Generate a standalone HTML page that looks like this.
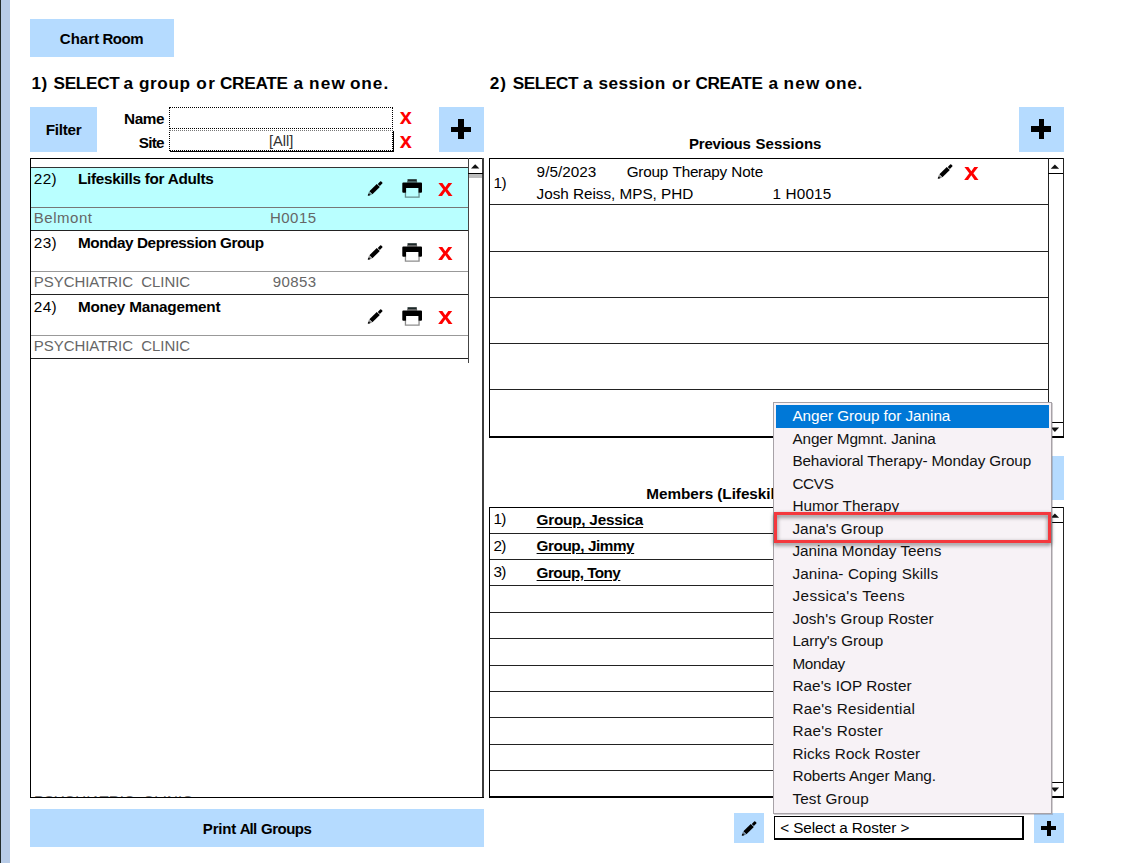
<!DOCTYPE html>
<html>
<head>
<meta charset="utf-8">
<title>Group Notes</title>
<style>
html,body{margin:0;padding:0;}
body{width:1138px;height:863px;position:relative;overflow:hidden;background:#fff;
 font-family:"Liberation Sans",sans-serif;font-size:14.67px;color:#000;}
.a{position:absolute;}
.t{position:absolute;white-space:pre;line-height:1;}
.b{font-weight:bold;}
.g{color:#666;}
.h{font-weight:bold;font-size:17.2px;letter-spacing:.37px;}
.rx{position:absolute;white-space:pre;line-height:1;font-weight:bold;color:#f00;font-size:22px;}
.dd{font-size:15px;color:#111;}
</style>
</head>
<body>
<div class="a" style="left:0px;top:0px;width:1px;height:863px;background:#232b2b"></div>
<div class="a" style="left:1px;top:0px;width:9px;height:863px;background:#b8cce8"></div>
<div class="a" style="left:30px;top:19px;width:144px;height:38px;background:#b5dbff"></div>
<div class="t " style="left:59.80px;top:30.8px;font-size:15px;letter-spacing:0.04px;font-weight:bold;">Chart</div>
<div class="t " style="left:102.40px;top:30.8px;font-size:15px;letter-spacing:-0.41px;font-weight:bold;">Room</div>
<div class="t " style="left:31.60px;top:74.5px;font-size:17.2px;letter-spacing:0.39px;font-weight:bold;">1)</div>
<div class="t " style="left:53.50px;top:74.5px;font-size:17.2px;letter-spacing:-0.31px;font-weight:bold;">SELECT</div>
<div class="t " style="left:123.60px;top:74.5px;font-size:17.2px;letter-spacing:0.00px;font-weight:bold;">a</div>
<div class="t " style="left:138.90px;top:74.5px;font-size:17.2px;letter-spacing:0.63px;font-weight:bold;">group</div>
<div class="t " style="left:196.20px;top:74.5px;font-size:17.2px;letter-spacing:1.50px;font-weight:bold;">or</div>
<div class="t " style="left:219.90px;top:74.5px;font-size:17.2px;letter-spacing:-0.26px;font-weight:bold;">CREATE</div>
<div class="t " style="left:293.60px;top:74.5px;font-size:17.2px;letter-spacing:0.00px;font-weight:bold;">a</div>
<div class="t " style="left:309.10px;top:74.5px;font-size:17.2px;letter-spacing:1.17px;font-weight:bold;">new</div>
<div class="t " style="left:349.90px;top:74.5px;font-size:17.2px;letter-spacing:0.98px;font-weight:bold;">one.</div>
<div class="t " style="left:489.70px;top:74.5px;font-size:17.2px;letter-spacing:0.99px;font-weight:bold;">2)</div>
<div class="t " style="left:512.70px;top:74.5px;font-size:17.2px;letter-spacing:-0.39px;font-weight:bold;">SELECT</div>
<div class="t " style="left:583.00px;top:74.5px;font-size:17.2px;letter-spacing:0.00px;font-weight:bold;">a</div>
<div class="t " style="left:598.40px;top:74.5px;font-size:17.2px;letter-spacing:0.47px;font-weight:bold;">session</div>
<div class="t " style="left:672.10px;top:74.5px;font-size:17.2px;letter-spacing:1.00px;font-weight:bold;">or</div>
<div class="t " style="left:695.40px;top:74.5px;font-size:17.2px;letter-spacing:-0.36px;font-weight:bold;">CREATE</div>
<div class="t " style="left:768.40px;top:74.5px;font-size:17.2px;letter-spacing:0.00px;font-weight:bold;">a</div>
<div class="t " style="left:783.40px;top:74.5px;font-size:17.2px;letter-spacing:1.32px;font-weight:bold;">new</div>
<div class="t " style="left:824.90px;top:74.5px;font-size:17.2px;letter-spacing:0.72px;font-weight:bold;">one.</div>
<div class="a" style="left:30px;top:107px;width:67px;height:45px;background:#b5dbff"></div>
<div class="t " style="left:45.80px;top:122.3px;font-size:15.3px;letter-spacing:-0.32px;font-weight:bold;">Filter</div>
<div class="t " style="left:124.00px;top:111.2px;font-size:15.3px;letter-spacing:-0.36px;font-weight:bold;">Name</div>
<div class="t " style="left:138.70px;top:134.9px;font-size:15.3px;letter-spacing:-0.73px;font-weight:bold;">Site</div>
<div class="a" style="left:169px;top:107px;width:222px;height:20px;border:1px dotted #000"></div>
<div class="a" style="left:169px;top:130px;width:222px;height:19px;border:1px dotted #000;border-top-color:#777;box-shadow:1px 1px 0 #000"></div>
<div class="t " style="left:269px;top:134px;color:#333">[All]</div>
<div class="rx" style="left:399.7px;top:106.3px;font-size:21.8px;transform-origin:0 0;transform:scaleX(1)">x</div>
<div class="rx" style="left:399.7px;top:129.8px;font-size:21.8px;transform-origin:0 0;transform:scaleX(1)">x</div>
<div class="a" style="left:439px;top:107px;width:45px;height:45px;background:#b5dbff"></div>
<div class="a" style="left:451px;top:126.5px;width:20px;height:5.2px;background:#000"></div>
<div class="a" style="left:458.4px;top:119px;width:5.2px;height:20px;background:#000"></div>
<div class="a" style="left:30px;top:158px;width:454px;height:1px;background:#000"></div>
<div class="a" style="left:30px;top:158px;width:1px;height:640px;background:#000"></div>
<div class="a" style="left:482px;top:158px;width:2px;height:640px;background:#3c3c3c"></div>
<div class="a" style="left:30px;top:797px;width:454px;height:1px;background:#000"></div>
<div class="a" style="left:468px;top:158px;width:1px;height:205px;background:#444"></div>
<div class="a" style="left:468px;top:173px;width:15px;height:1px;background:#000"></div>
<div class="a" style="left:469px;top:174px;width:13px;height:4px;background:#bdbdbd"></div>
<svg class="a" style="left:469px;top:159px" width="13" height="14" viewBox="0 0 13 14"><path d="M2.0 9.6 L6.2 5.2 L10.4 9.6 Z" fill="#111"/></svg>
<div class="a" style="left:31px;top:168px;width:437px;height:62px;background:#b9ffff"></div>
<div class="a" style="left:31px;top:167px;width:437px;height:1px;background:#333"></div>
<div class="a" style="left:31px;top:207px;width:437px;height:1px;background:#777"></div>
<div class="a" style="left:31px;top:230px;width:437px;height:1px;background:#222"></div>
<div class="a" style="left:31px;top:271px;width:437px;height:1px;background:#999"></div>
<div class="a" style="left:31px;top:294px;width:437px;height:1px;background:#222"></div>
<div class="a" style="left:31px;top:335px;width:437px;height:1px;background:#999"></div>
<div class="a" style="left:31px;top:358px;width:437px;height:1px;background:#222"></div>
<div class="t " style="left:33.80px;top:170.5px;font-size:15.3px;letter-spacing:0.35px;">22)</div>
<div class="t " style="left:77.90px;top:170.5px;font-size:15.3px;letter-spacing:-0.27px;font-weight:bold;">Lifeskills for Adults</div>
<div class="t g" style="left:33.80px;top:210px;font-size:15px;letter-spacing:0.52px;">Belmont</div>
<div class="t g" style="left:269.90px;top:210px;font-size:15px;letter-spacing:0.51px;">H0015</div>
<svg class="a" style="left:367px;top:181px" width="16" height="16" viewBox="0 0 16 16"><path d="M2.38 10.28 L9.78 2.88 L12.82 5.92 L5.42 13.32 Z" fill="#000"/><rect x="11.75" y="0.35" width="3.0" height="4.3" rx="0.8" transform="rotate(45 13.25 2.5)" fill="#000"/><path d="M1.98 10.68 L5.02 13.72 L0.6 15.1 Z" fill="rgba(0,0,0,.5)"/><circle cx="1.9" cy="13.8" r="1.0" fill="#111"/></svg>
<svg class="a" style="left:402.3px;top:179px" width="21" height="20" viewBox="0 0 21 20"><rect x="5.5" y="0.2" width="9.3" height="1.8" fill="#1c2828"/><rect x="5.2" y="2.0" width="9.9" height="1.6" fill="rgba(0,0,0,.6)"/><path d="M1.3 3.5 H19 a1 1 0 0 1 1 1 V12.8 a1 1 0 0 1 -1 1 H16.4 V8.9 H4.1 V13.8 H1.3 a1 1 0 0 1 -1 -1 V4.5 a1 1 0 0 1 1 -1 Z" fill="#000"/><path d="M2.8 13.8 H4.1 V17.4 H16.4 V13.8 H17.7 V18.8 H2.8 Z" fill="rgba(0,0,0,.45)"/></svg>
<div class="rx" style="left:438.4px;top:177.2px;font-size:23.4px;transform-origin:0 0;transform:scaleX(1.13)">x</div>
<div class="t " style="left:33.80px;top:234.5px;font-size:15.3px;letter-spacing:0.35px;">23)</div>
<div class="t " style="left:77.90px;top:234.5px;font-size:15.3px;letter-spacing:-0.42px;font-weight:bold;">Monday Depression Group</div>
<div class="t g" style="left:33.80px;top:274px;font-size:15px;letter-spacing:-0.05px;">PSYCHIATRIC  CLINIC</div>
<div class="t g" style="left:272.80px;top:274px;font-size:15px;letter-spacing:0.40px;">90853</div>
<svg class="a" style="left:367px;top:245px" width="16" height="16" viewBox="0 0 16 16"><path d="M2.38 10.28 L9.78 2.88 L12.82 5.92 L5.42 13.32 Z" fill="#000"/><rect x="11.75" y="0.35" width="3.0" height="4.3" rx="0.8" transform="rotate(45 13.25 2.5)" fill="#000"/><path d="M1.98 10.68 L5.02 13.72 L0.6 15.1 Z" fill="rgba(0,0,0,.5)"/><circle cx="1.9" cy="13.8" r="1.0" fill="#111"/></svg>
<svg class="a" style="left:402.3px;top:243px" width="21" height="20" viewBox="0 0 21 20"><rect x="5.5" y="0.2" width="9.3" height="1.8" fill="#1c2828"/><rect x="5.2" y="2.0" width="9.9" height="1.6" fill="rgba(0,0,0,.6)"/><path d="M1.3 3.5 H19 a1 1 0 0 1 1 1 V12.8 a1 1 0 0 1 -1 1 H16.4 V8.9 H4.1 V13.8 H1.3 a1 1 0 0 1 -1 -1 V4.5 a1 1 0 0 1 1 -1 Z" fill="#000"/><path d="M2.8 13.8 H4.1 V17.4 H16.4 V13.8 H17.7 V18.8 H2.8 Z" fill="rgba(0,0,0,.45)"/></svg>
<div class="rx" style="left:438.4px;top:241.2px;font-size:23.4px;transform-origin:0 0;transform:scaleX(1.13)">x</div>
<div class="t " style="left:33.80px;top:298.5px;font-size:15.3px;letter-spacing:0.35px;">24)</div>
<div class="t " style="left:77.90px;top:298.5px;font-size:15.3px;letter-spacing:-0.24px;font-weight:bold;">Money Management</div>
<div class="t g" style="left:33.80px;top:338px;font-size:15px;letter-spacing:-0.05px;">PSYCHIATRIC  CLINIC</div>
<svg class="a" style="left:367px;top:309px" width="16" height="16" viewBox="0 0 16 16"><path d="M2.38 10.28 L9.78 2.88 L12.82 5.92 L5.42 13.32 Z" fill="#000"/><rect x="11.75" y="0.35" width="3.0" height="4.3" rx="0.8" transform="rotate(45 13.25 2.5)" fill="#000"/><path d="M1.98 10.68 L5.02 13.72 L0.6 15.1 Z" fill="rgba(0,0,0,.5)"/><circle cx="1.9" cy="13.8" r="1.0" fill="#111"/></svg>
<svg class="a" style="left:402.3px;top:307px" width="21" height="20" viewBox="0 0 21 20"><rect x="5.5" y="0.2" width="9.3" height="1.8" fill="#1c2828"/><rect x="5.2" y="2.0" width="9.9" height="1.6" fill="rgba(0,0,0,.6)"/><path d="M1.3 3.5 H19 a1 1 0 0 1 1 1 V12.8 a1 1 0 0 1 -1 1 H16.4 V8.9 H4.1 V13.8 H1.3 a1 1 0 0 1 -1 -1 V4.5 a1 1 0 0 1 1 -1 Z" fill="#000"/><path d="M2.8 13.8 H4.1 V17.4 H16.4 V13.8 H17.7 V18.8 H2.8 Z" fill="rgba(0,0,0,.45)"/></svg>
<div class="rx" style="left:438.4px;top:305.2px;font-size:23.4px;transform-origin:0 0;transform:scaleX(1.13)">x</div>
<div class="a" style="left:31px;top:796px;width:300px;height:1px;overflow:hidden"><div class="t g" style="left:3px;top:-3px;font-size:15px;letter-spacing:.1px;color:#777">PSYCHIATRIC  CLINIC</div></div>
<div class="a" style="left:30px;top:809px;width:454px;height:38px;background:#b5dbff"></div>
<div class="t " style="left:202.80px;top:821.3px;font-size:15px;letter-spacing:-0.15px;font-weight:bold;">Print</div>
<div class="t " style="left:239.70px;top:821.3px;font-size:15px;letter-spacing:-0.90px;font-weight:bold;">All</div>
<div class="t " style="left:261.00px;top:821.3px;font-size:15px;letter-spacing:-0.49px;font-weight:bold;">Groups</div>
<div class="t " style="left:689.10px;top:136px;font-size:15px;letter-spacing:-0.23px;font-weight:bold;">Previous</div>
<div class="t " style="left:755.60px;top:136px;font-size:15px;letter-spacing:-0.01px;font-weight:bold;">Sessions</div>
<div class="a" style="left:1019px;top:107px;width:45px;height:45px;background:#b5dbff"></div>
<div class="a" style="left:1031.3px;top:126.4px;width:20px;height:5.2px;background:#000"></div>
<div class="a" style="left:1038.7px;top:119px;width:5.2px;height:20px;background:#000"></div>
<div class="a" style="left:489px;top:158px;width:575px;height:1px;background:#000"></div>
<div class="a" style="left:489px;top:158px;width:1px;height:280px;background:#000"></div>
<div class="a" style="left:1063px;top:158px;width:1px;height:280px;background:#222"></div>
<div class="a" style="left:1048px;top:158px;width:1px;height:280px;background:#222"></div>
<div class="a" style="left:489px;top:436px;width:575px;height:2px;background:#000"></div>
<div class="a" style="left:490px;top:204px;width:558px;height:1px;background:#222"></div>
<div class="a" style="left:490px;top:251px;width:558px;height:1px;background:#222"></div>
<div class="a" style="left:490px;top:297px;width:558px;height:1px;background:#222"></div>
<div class="a" style="left:490px;top:343px;width:558px;height:1px;background:#222"></div>
<div class="a" style="left:490px;top:389px;width:558px;height:1px;background:#222"></div>
<div class="a" style="left:1048px;top:173px;width:15px;height:1px;background:#000"></div>
<div class="a" style="left:1048px;top:422px;width:15px;height:1px;background:#000"></div>
<svg class="a" style="left:1049px;top:159px" width="14" height="14" viewBox="0 0 14 14"><path d="M1.7 9.8 L5.9 5.5 L10.1 9.8 Z" fill="#111"/></svg>
<svg class="a" style="left:1049px;top:423px" width="14" height="14" viewBox="0 0 14 14"><path d="M1.7 4.6 L10.1 4.6 L5.9 8.9 Z" fill="#111"/></svg>
<div class="t " style="left:493.60px;top:175px;font-size:15.3px;letter-spacing:-0.62px;">1)</div>
<div class="t " style="left:536.60px;top:164.2px;font-size:15.3px;letter-spacing:0.03px;">9/5/2023</div>
<div class="t " style="left:626.70px;top:164.2px;font-size:15.3px;letter-spacing:-0.23px;">Group</div>
<div class="t " style="left:672.60px;top:164.2px;font-size:15.3px;letter-spacing:-0.28px;">Therapy</div>
<div class="t " style="left:731.20px;top:164.2px;font-size:15.3px;letter-spacing:-0.06px;">Note</div>
<div class="t " style="left:536.60px;top:186.4px;font-size:15.3px;letter-spacing:-0.03px;">Josh Reiss, MPS, PHD</div>
<div class="t " style="left:772.40px;top:186.4px;font-size:15.3px;letter-spacing:0.18px;">1 H0015</div>
<svg class="a" style="left:937.3px;top:164px" width="16" height="16" viewBox="0 0 16 16"><path d="M2.38 10.28 L9.78 2.88 L12.82 5.92 L5.42 13.32 Z" fill="#000"/><rect x="11.75" y="0.35" width="3.0" height="4.3" rx="0.8" transform="rotate(45 13.25 2.5)" fill="#000"/><path d="M1.98 10.68 L5.02 13.72 L0.6 15.1 Z" fill="rgba(0,0,0,.5)"/><circle cx="1.9" cy="13.8" r="1.0" fill="#111"/></svg>
<div class="rx" style="left:963.8px;top:160.8px;font-size:23.4px;transform-origin:0 0;transform:scaleX(1.13)">x</div>
<div class="t b" style="left:646.3px;top:486px;font-size:15.3px;letter-spacing:-.05px">Members (Lifeskills for Adults)</div>
<div class="a" style="left:1019px;top:456px;width:45px;height:44px;background:#b5dbff"></div>
<div class="a" style="left:489px;top:507px;width:575px;height:1px;background:#000"></div>
<div class="a" style="left:489px;top:507px;width:1px;height:290px;background:#000"></div>
<div class="a" style="left:1063px;top:507px;width:1px;height:290px;background:#222"></div>
<div class="a" style="left:1048px;top:507px;width:1px;height:290px;background:#222"></div>
<div class="a" style="left:489px;top:796px;width:575px;height:2px;background:#000"></div>
<div class="a" style="left:1048px;top:522px;width:15px;height:1px;background:#000"></div>
<div class="a" style="left:1048px;top:782px;width:15px;height:1px;background:#000"></div>
<svg class="a" style="left:1049px;top:508px" width="14" height="14" viewBox="0 0 14 14"><path d="M1.7 9.8 L5.9 5.5 L10.1 9.8 Z" fill="#111"/></svg>
<svg class="a" style="left:1049px;top:783px" width="14" height="14" viewBox="0 0 14 14"><path d="M1.7 4.6 L10.1 4.6 L5.9 8.9 Z" fill="#111"/></svg>
<div class="a" style="left:490px;top:533px;width:558px;height:1px;background:#222"></div>
<div class="a" style="left:490px;top:559px;width:558px;height:1px;background:#222"></div>
<div class="a" style="left:490px;top:585px;width:558px;height:1px;background:#222"></div>
<div class="a" style="left:490px;top:612px;width:558px;height:1px;background:#222"></div>
<div class="a" style="left:490px;top:638px;width:558px;height:1px;background:#222"></div>
<div class="a" style="left:490px;top:665px;width:558px;height:1px;background:#222"></div>
<div class="a" style="left:490px;top:691px;width:558px;height:1px;background:#222"></div>
<div class="a" style="left:490px;top:717px;width:558px;height:1px;background:#222"></div>
<div class="a" style="left:490px;top:744px;width:558px;height:1px;background:#222"></div>
<div class="a" style="left:490px;top:770px;width:558px;height:1px;background:#222"></div>
<div class="t " style="left:493.60px;top:511.3px;font-size:15.3px;letter-spacing:-0.82px;">1)</div>
<div class="t " style="left:536.60px;top:512.1px;font-size:15.3px;letter-spacing:-0.23px;font-weight:bold;text-decoration:underline;text-underline-offset:2px;">Group, Jessica</div>
<div class="t " style="left:493.60px;top:537.5px;font-size:15.3px;letter-spacing:-0.82px;">2)</div>
<div class="t " style="left:536.60px;top:538.4px;font-size:15.3px;letter-spacing:-0.44px;font-weight:bold;text-decoration:underline;text-underline-offset:2px;">Group, Jimmy</div>
<div class="t " style="left:493.60px;top:563.8px;font-size:15.3px;letter-spacing:-0.82px;">3)</div>
<div class="t " style="left:536.60px;top:564.6px;font-size:15.3px;letter-spacing:-0.55px;font-weight:bold;text-decoration:underline;text-underline-offset:2px;">Group, Tony</div>
<div class="a" style="left:734px;top:813px;width:30px;height:30px;background:#b5dbff"></div>
<svg class="a" style="left:741px;top:820.5px" width="16" height="16" viewBox="0 0 16 16"><path d="M2.38 10.28 L9.78 2.88 L12.82 5.92 L5.42 13.32 Z" fill="#000"/><rect x="11.75" y="0.35" width="3.0" height="4.3" rx="0.8" transform="rotate(45 13.25 2.5)" fill="#000"/><path d="M1.98 10.68 L5.02 13.72 L0.6 15.1 Z" fill="rgba(0,0,0,.5)"/><circle cx="1.9" cy="13.8" r="1.0" fill="#111"/></svg>
<div class="a" style="left:774px;top:816px;width:247px;height:21px;background:#fff;border:1px solid #000;border-right-width:2px;border-bottom-width:2px"></div>
<div class="t " style="left:780.20px;top:819.5px;font-size:15.3px;letter-spacing:-0.10px;">&lt; Select a Roster &gt;</div>
<div class="a" style="left:1034px;top:813px;width:30px;height:30px;background:#b5dbff"></div>
<div class="a" style="left:1041.2px;top:826.1px;width:15px;height:4.3px;background:#000"></div>
<div class="a" style="left:1046.5px;top:820.9px;width:4.2px;height:14.8px;background:#000"></div>
<div class="a" style="left:773px;top:402px;width:277px;height:410px;background:#f7f2f6;border:1px solid #a7a2a7;box-shadow:1px 1px 0 rgba(110,100,110,.3)"></div>
<div class="a" style="left:776px;top:405.4px;width:273px;height:22.4px;background:#0078d7"></div>
<div class="t dd" style="left:792.40px;top:408.0px;font-size:15.3px;letter-spacing:-0.05px;color:#fff;">Anger Group for Janina</div>
<div class="t dd" style="left:792.40px;top:430.5px;font-size:15.3px;letter-spacing:-0.11px;">Anger Mgmnt. Janina</div>
<div class="t dd" style="left:792.40px;top:453.0px;font-size:15.3px;letter-spacing:-0.13px;">Behavioral Therapy- Monday Group</div>
<div class="t dd" style="left:792.40px;top:475.5px;font-size:15.3px;letter-spacing:-0.34px;">CCVS</div>
<div class="t dd" style="left:792.40px;top:498.0px;font-size:15.3px;letter-spacing:0.06px;">Humor Therapy</div>
<div class="t dd" style="left:792.40px;top:520.5px;font-size:15.3px;letter-spacing:0.05px;">Jana's Group</div>
<div class="t dd" style="left:792.40px;top:543.0px;font-size:15.3px;letter-spacing:0.02px;">Janina Monday Teens</div>
<div class="t dd" style="left:792.40px;top:565.5px;font-size:15.3px;letter-spacing:0.14px;">Janina- Coping Skills</div>
<div class="t dd" style="left:792.40px;top:588.0px;font-size:15.3px;letter-spacing:0.42px;">Jessica's Teens</div>
<div class="t dd" style="left:792.40px;top:610.5px;font-size:15.3px;letter-spacing:0.13px;">Josh's Group Roster</div>
<div class="t dd" style="left:792.40px;top:633.0px;font-size:15.3px;letter-spacing:-0.10px;">Larry's Group</div>
<div class="t dd" style="left:792.40px;top:655.5px;font-size:15.3px;letter-spacing:-0.31px;">Monday</div>
<div class="t dd" style="left:792.40px;top:678.0px;font-size:15.3px;letter-spacing:0.06px;">Rae's IOP Roster</div>
<div class="t dd" style="left:792.40px;top:700.5px;font-size:15.3px;letter-spacing:0.24px;">Rae's Residential</div>
<div class="t dd" style="left:792.40px;top:723.0px;font-size:15.3px;letter-spacing:0.23px;">Rae's Roster</div>
<div class="t dd" style="left:792.40px;top:745.5px;font-size:15.3px;letter-spacing:0.12px;">Ricks Rock Roster</div>
<div class="t dd" style="left:792.40px;top:768.0px;font-size:15.3px;letter-spacing:-0.05px;">Roberts Anger Mang.</div>
<div class="t dd" style="left:792.40px;top:790.5px;font-size:15.3px;letter-spacing:0.16px;">Test Group</div>
<div class="a" style="left:774px;top:512px;width:277px;height:31px;background:#f7f2f6"></div>
<div class="t dd" style="left:792.40px;top:520.5px;font-size:15.3px;letter-spacing:0.05px;">Jana's Group</div>
<div class="a" style="left:774px;top:512px;width:271px;height:25px;border:3px solid #f4383d;filter:drop-shadow(0.5px 2px 2px rgba(0,0,0,.55))"></div>
</body>
</html>
